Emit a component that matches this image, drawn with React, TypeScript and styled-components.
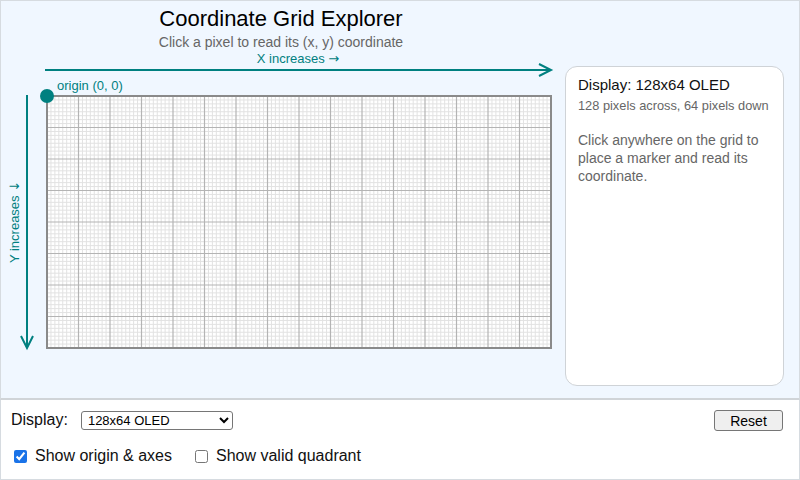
import React from "react";
import styled, { createGlobalStyle } from "styled-components";

const GlobalStyle = createGlobalStyle`
  html, body {
    margin: 0;
    padding: 0;
    background: #ffffff;
  }
  body {
    font-family: "Liberation Sans", Arial, sans-serif;
  }
`;

const TEAL = "#008080";

const Page = styled.div`
  width: 800px;
  height: 480px;
  display: flex;
  flex-direction: column;
  box-sizing: border-box;
  overflow: hidden;
`;

const Stage = styled.section`
  height: 400px;
  box-sizing: border-box;
  background: #f0f7ff;
  border: 1px solid #d6dbe0;
  border-bottom: 2px solid #d0d4d8;
  display: flex;
  gap: 4px;
`;

const LeftColumn = styled.div`
  width: 560px;
  display: flex;
  flex-direction: column;
  align-items: center;
`;

const Title = styled.h1`
  margin: 5px 0 0;
  font-size: 22px;
  font-weight: 400;
  line-height: 26px;
  color: #000;
`;

const Subtitle = styled.p`
  margin: 2px 0 0;
  font-size: 14px;
  line-height: 17px;
  color: #666;
`;

const Diagram = styled.svg`
  display: block;
  margin: -1px 0 0 -1px;
  font-family: "Liberation Sans", Arial, sans-serif;
`;

const Glyph = styled.tspan`
  font-family: "DejaVu Sans", sans-serif;
`;

const InfoCard = styled.aside`
  margin-top: 65px;
  width: 219px;
  height: 320px;
  box-sizing: border-box;
  background: #fff;
  border: 1px solid #cfd3d7;
  border-radius: 12px;
  padding: 9px 12px;
`;

const CardTitle = styled.div`
  font-size: 15px;
  line-height: 18px;
  color: #111;
`;

const CardMeta = styled.div`
  margin-top: 4px;
  font-size: 12.8px;
  line-height: 16px;
  color: #666;
`;

const CardText = styled.p`
  margin: 17px 0 0;
  font-size: 14px;
  line-height: 18px;
  color: #666;
`;

const Controls = styled.section`
  flex: 1;
  box-sizing: border-box;
  background: #fff;
  border: 1px solid #d6dbe0;
  border-top: none;
  padding: 9px 16px 0 10px;
  display: flex;
  flex-direction: column;
  gap: 16px;
`;

const Row = styled.div`
  display: flex;
  align-items: center;
  gap: 13px;
`;

const Label = styled.label`
  font-size: 16px;
  color: #111;
`;

const Select = styled.select`
  width: 152px;
  height: 19px;
  font-family: "Liberation Sans", Arial, sans-serif;
  font-size: 13px;
  border: 1px solid #767676;
  border-radius: 3px;
  background: #fff;
  color: #000;
  padding: 0 2px;
`;

const ResetButton = styled.button`
  margin-left: auto;
  margin-top: 1px;
  width: 69px;
  height: 21px;
  font-family: "Liberation Sans", Arial, sans-serif;
  font-size: 14px;
  color: #000;
  background: #efefef;
  border: 1px solid #767676;
  border-radius: 3px;
  padding: 0;
`;

const CheckRow = styled.div`
  display: flex;
  align-items: center;
  gap: 23px;
  padding-left: 3px;
`;

const CheckLabel = styled.label`
  display: flex;
  align-items: center;
  gap: 8px;
  font-size: 16px;
  color: #111;
`;

const Box = styled.input`
  margin: 0;
  width: 13px;
  height: 13px;
  accent-color: #1a73e8;
`;

const GRID_X = 46;
const GRID_Y = 96;
const COLS = 128;
const ROWS = 64;
const CELL = 3.9375;
const GRID_W = COLS * CELL;
const GRID_H = ROWS * CELL;

function Grid() {
  const minor: React.ReactNode[] = [];
  const major: React.ReactNode[] = [];
  for (let i = 1; i < COLS; i++) {
    const x = GRID_X + i * CELL;
    const line = (
      <line key={`v${i}`} x1={x} y1={GRID_Y} x2={x} y2={GRID_Y + GRID_H} />
    );
    (i % 8 === 0 ? major : minor).push(line);
  }
  for (let j = 1; j < ROWS; j++) {
    const y = GRID_Y + j * CELL;
    const line = (
      <line key={`h${j}`} x1={GRID_X} y1={y} x2={GRID_X + GRID_W} y2={y} />
    );
    (j % 8 === 0 ? major : minor).push(line);
  }
  return (
    <g>
      <rect x={GRID_X} y={GRID_Y} width={GRID_W} height={GRID_H} fill="#fff" />
      <g stroke="#e2e2e2" strokeWidth={1}>{minor}</g>
      <g stroke="#b4b4b4" strokeWidth={1.2}>{major}</g>
      <rect
        x={GRID_X}
        y={GRID_Y}
        width={GRID_W}
        height={GRID_H}
        fill="none"
        stroke="#8a8a8a"
        strokeWidth={2}
      />
    </g>
  );
}

function Axes() {
  return (
    <g stroke={TEAL} strokeWidth={2} fill="none" strokeLinecap="square">
      <line x1={45} y1={70} x2={549} y2={70} />
      <polyline points="538,64 550,70 538,76" strokeLinecap="butt" />
      <line x1={26} y1={96} x2={26} y2={347} />
      <polyline points="20,336 26,348 32,336" strokeLinecap="butt" />
    </g>
  );
}

export default function App() {
  return (
    <Page>
      <GlobalStyle />
      <Stage>
        <LeftColumn>
          <Title>Coordinate Grid Explorer</Title>
          <Subtitle>Click a pixel to read its (x, y) coordinate</Subtitle>
          <Diagram width={560} height={310} viewBox="0 50 560 310">
            <text x={297} y={63} fontSize={13} fill={TEAL} textAnchor="middle">
              X increases <Glyph>→</Glyph>
            </text>
            <Axes />
            <text
              x={18}
              y={222}
              fontSize={13}
              fill={TEAL}
              textAnchor="middle"
              transform="rotate(-90 18 222)"
            >
              Y increases <Glyph>↓</Glyph>
            </text>
            <Grid />
            <circle cx={46} cy={96} r={7} fill={TEAL} />
            <text x={56} y={90} fontSize={13} fill={TEAL}>
              origin (0, 0)
            </text>
          </Diagram>
        </LeftColumn>
        <InfoCard>
          <CardTitle>Display: 128x64 OLED</CardTitle>
          <CardMeta>128 pixels across, 64 pixels down</CardMeta>
          <CardText>
            Click anywhere on the grid to place a marker and read its
            coordinate.
          </CardText>
        </InfoCard>
      </Stage>
      <Controls>
        <Row>
          <Label htmlFor="display">Display:</Label>
          <Select id="display" defaultValue="128x64">
            <option value="128x64">128x64 OLED</option>
            <option value="128x32">128x32 OLED</option>
            <option value="84x48">84x48 LCD</option>
          </Select>
          <ResetButton type="button">Reset</ResetButton>
        </Row>
        <CheckRow>
          <CheckLabel>
            <Box type="checkbox" defaultChecked />
            Show origin &amp; axes
          </CheckLabel>
          <CheckLabel>
            <Box type="checkbox" />
            Show valid quadrant
          </CheckLabel>
        </CheckRow>
      </Controls>
    </Page>
  );
}
